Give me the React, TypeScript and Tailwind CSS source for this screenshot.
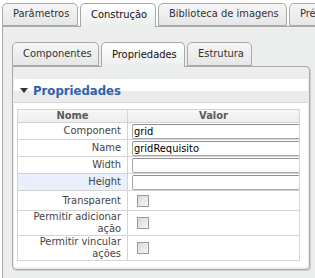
import React from 'react';

const font = { fontFamily: '"DejaVu Sans Condensed", "Liberation Sans", Arial, sans-serif' };

const outerTabs = [
  { label: 'Parâmetros', active: false, w: 'w-[76px]' },
  { label: 'Construção', active: true, w: 'w-[76px]' },
  { label: 'Biblioteca de imagens', active: false, w: 'w-[129px]' },
  { label: 'Pré-visualização', active: false, w: 'w-[90px]' },
];

const innerTabs = [
  { label: 'Componentes', active: false, w: 'w-[87px]' },
  { label: 'Propriedades', active: true, w: 'w-[84px]' },
  { label: 'Estrutura', active: false, w: 'w-[65px]' },
];

type Row = { label: string[]; kind: 'input' | 'check'; value?: string; h: string; hl?: boolean };

const rows: Row[] = [
  { label: ['Component'], kind: 'input', value: 'grid', h: 'h-[17px]' },
  { label: ['Name'], kind: 'input', value: 'gridRequisito', h: 'h-[17px]' },
  { label: ['Width'], kind: 'input', value: '', h: 'h-[17px]' },
  { label: ['Height'], kind: 'input', value: '', h: 'h-[17px]', hl: true },
  { label: ['Transparent'], kind: 'check', h: 'h-[20px]' },
  { label: ['Permitir adicionar', 'ação'], kind: 'check', h: 'h-[24px]' },
  { label: ['Permitir vincular', 'ações'], kind: 'check', h: 'h-[25px]' },
];

function Tab({ label, active, w, tall }: { label: string; active: boolean; w: string; tall?: boolean }) {
  const h = tall ? (active ? 'h-[25px]' : 'h-[24px]') : active ? 'h-[24px]' : 'h-[23px]';
  return (
    <div
      className={`shrink-0 flex items-center pl-[10px] border border-[#a9a9a9] rounded-t-[5px] text-[11px] whitespace-nowrap overflow-hidden ${w} ${h} ${
        active
          ? '-mb-px border-b-0 bg-gradient-to-b from-white to-[#eceeee] text-[#111]'
          : 'bg-gradient-to-b from-[#f6f6f6] to-[#e6e6e6] text-[#333]'
      }`}
    >
      {label}
    </div>
  );
}

export default function App() {
  return (
    <div className="w-[315px] h-[278px] overflow-hidden bg-white flex flex-col" style={font}>
      <div className="flex items-end gap-[2px] pl-[2px] pt-[3px] relative z-10">
        {outerTabs.map((t) => (
          <Tab key={t.label} {...t} />
        ))}
      </div>

      <div className="flex-1 ml-[2px] border-l border-t border-[#a9a9a9] bg-[#eceeee] pt-[15px] pl-[9px]">
        <div className="flex items-end gap-[2px] relative z-10">
          {innerTabs.map((t) => (
            <Tab key={t.label} {...t} tall />
          ))}
        </div>

        <div className="w-[298px] h-[204px] border border-[#a9a9a9] rounded-b-[4px] rounded-tr-[4px] bg-[#eceeee] pt-[12px] px-px pb-[2px] shadow-[1px_1px_0_#d0d0d0]">
          <div className="h-full bg-white">
            <div className="h-[24px] flex items-center gap-[5px] pl-[6px] border-b border-[#d6d6d6] bg-gradient-to-b from-white from-50% to-[#ebebeb] to-50%">
              <span className="w-0 h-0 border-l-[4px] border-r-[4px] border-t-[5px] border-l-transparent border-r-transparent border-t-[#333]" />
              <span className="text-[13px] font-bold text-[#2e62ad]">Propriedades</span>
            </div>

            <table className="ml-[3px] mt-[6px] w-[283px] border-collapse text-[11px] leading-[12px] table-fixed">
              <colgroup>
                <col className="w-[110px]" />
                <col />
              </colgroup>
              <thead>
                <tr className="h-[13px] bg-gradient-to-b from-[#f7f7f7] to-[#ececec]">
                  <th className="border border-[#d4d4d4] text-center font-bold text-[#5a5a5a] p-0">Nome</th>
                  <th className="border border-[#d4d4d4] text-center font-bold text-[#5a5a5a] p-0">Valor</th>
                </tr>
              </thead>
              <tbody>
                {rows.map((r) => (
                  <tr key={r.label.join(' ')} className={r.h}>
                    <td
                      className={`border border-[#d4d4d4] text-right pr-[6px] text-[#444] p-0 align-middle ${
                        r.hl ? 'bg-[#e8f0fb]' : ''
                      }`}
                    >
                      {r.label.map((l) => (
                        <div key={l}>{l}</div>
                      ))}
                    </td>
                    <td className="border border-[#d4d4d4] p-0 pl-[4px] align-middle">
                      {r.kind === 'input' ? (
                        <input
                          readOnly
                          value={r.value}
                          className="block w-[168px] h-[15px] px-[1px] border border-[#a7a7a7] border-t-[#8f8f8f] rounded-[2px] text-[11px] text-black bg-white outline-none"
                          style={font}
                        />
                      ) : (
                        <div className="ml-[5px] w-[12px] h-[12px] border border-[#9a9a9a] bg-gradient-to-br from-[#d9d9d9] to-[#f7f7f7]" />
                      )}
                    </td>
                  </tr>
                ))}
              </tbody>
            </table>
          </div>
        </div>
      </div>
    </div>
  );
}
